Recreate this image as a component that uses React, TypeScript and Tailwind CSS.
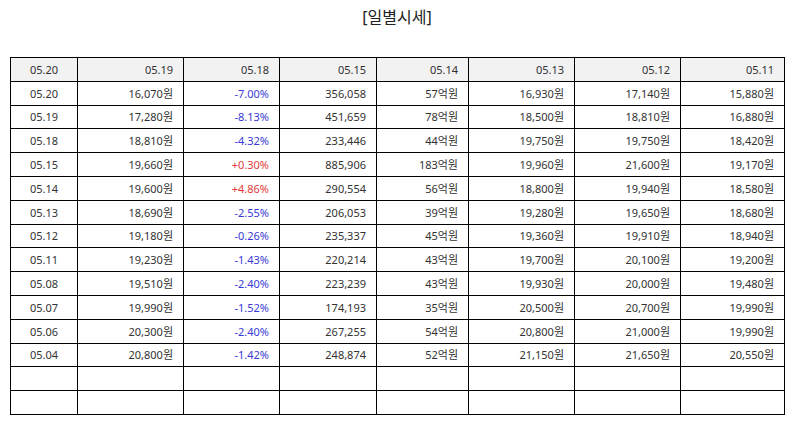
const ROWS: string[][] = [
  ["05.20", "16,070원", "-7.00%", "356,058", "57억원", "16,930원", "17,140원", "15,880원"],
  ["05.19", "17,280원", "-8.13%", "451,659", "78억원", "18,500원", "18,810원", "16,880원"],
  ["05.18", "18,810원", "-4.32%", "233,446", "44억원", "19,750원", "19,750원", "18,420원"],
  ["05.15", "19,660원", "+0.30%", "885,906", "183억원", "19,960원", "21,600원", "19,170원"],
  ["05.14", "19,600원", "+4.86%", "290,554", "56억원", "18,800원", "19,940원", "18,580원"],
  ["05.13", "18,690원", "-2.55%", "206,053", "39억원", "19,280원", "19,650원", "18,680원"],
  ["05.12", "19,180원", "-0.26%", "235,337", "45억원", "19,360원", "19,910원", "18,940원"],
  ["05.11", "19,230원", "-1.43%", "220,214", "43억원", "19,700원", "20,100원", "19,200원"],
  ["05.08", "19,510원", "-2.40%", "223,239", "43억원", "19,930원", "20,000원", "19,480원"],
  ["05.07", "19,990원", "-1.52%", "174,193", "35억원", "20,500원", "20,700원", "19,990원"],
  ["05.06", "20,300원", "-2.40%", "267,255", "54억원", "20,800원", "21,000원", "19,990원"],
  ["05.04", "20,800원", "-1.42%", "248,874", "52억원", "21,150원", "21,650원", "20,550원"],
];

const HEADER = ["05.20", "05.19", "05.18", "05.15", "05.14", "05.13", "05.12", "05.11"];
const WIDTHS = ["w-[67px]", "w-[106px]", "w-[96px]", "w-[97px]", "w-[92px]", "w-[106px]", "w-[106px]", "w-[104px]"];

function cellClass(i: number) {
  return i === 0
    ? "h-[23.8px] border border-black px-[10px] text-center"
    : "h-[23.8px] border border-black px-[10px] text-right";
}

export default function App() {
  return (
    <div
      className="h-[425px] w-[794px] overflow-hidden bg-white text-[#333]"
      style={{ fontFamily: '"Noto Sans", "Noto Sans CJK KR", sans-serif' }}
    >
      <h1 className="pt-[5px] text-center text-[16px] leading-[24px] text-[#222]">[일별시세]</h1>

      <div className="px-[10px] pt-[28px]">
        <table className="w-[774px] table-fixed border-collapse border border-black text-[11px] leading-none">
          <colgroup>
            {WIDTHS.map((w, i) => (
              <col key={i} className={w} />
            ))}
          </colgroup>
          <thead>
            <tr className="bg-[#f2f2f2]">
              {HEADER.map((h, i) => (
                <th key={i} className={`${cellClass(i)} font-normal`}>
                  {h}
                </th>
              ))}
            </tr>
          </thead>
          <tbody>
            {ROWS.map((row, r) => (
              <tr key={r}>
                {row.map((v, i) => {
                  let color = "";
                  if (i === 2) color = v.startsWith("+") ? "text-[#e23a3a]" : "text-[#3a3ad6]";
                  return (
                    <td key={i} className={`${cellClass(i)} ${color}`}>
                      {v}
                    </td>
                  );
                })}
              </tr>
            ))}
            {[0, 1].map((r) => (
              <tr key={`e${r}`}>
                {HEADER.map((_, i) => (
                  <td key={i} className={cellClass(i)} />
                ))}
              </tr>
            ))}
          </tbody>
        </table>
      </div>
    </div>
  );
}
